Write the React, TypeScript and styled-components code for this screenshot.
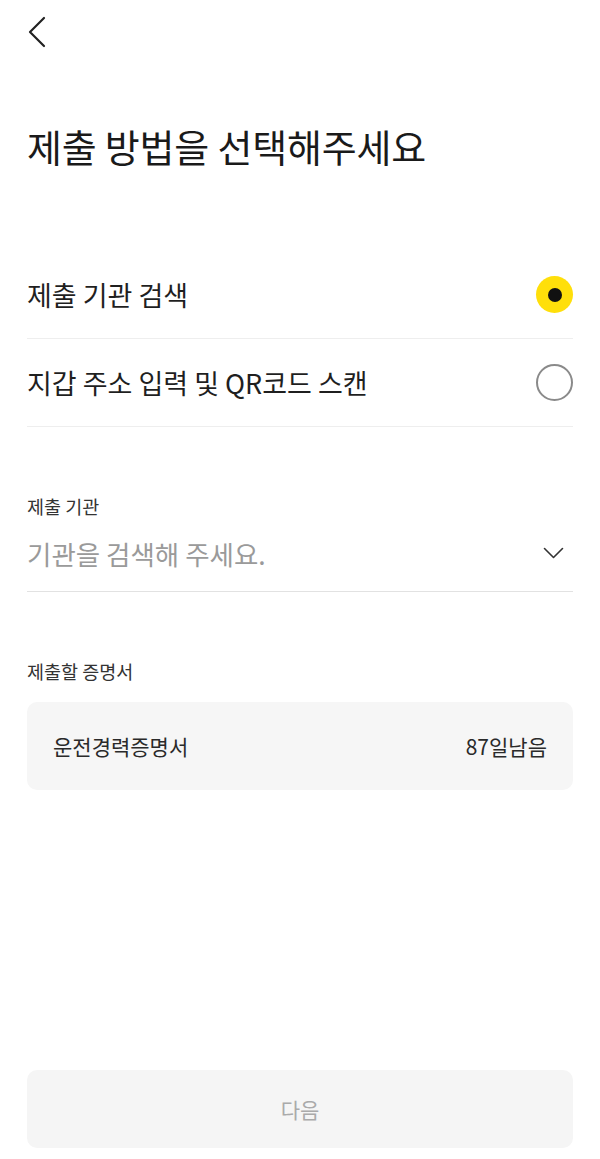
import React, { useState } from "react";
import styled, { createGlobalStyle } from "styled-components";

const GlobalStyle = createGlobalStyle`
  html, body {
    margin: 0;
    padding: 0;
    background: #ffffff;
  }
  body {
    font-family: "Noto Sans CJK KR", "Noto Sans", sans-serif;
    color: #1a1a1a;
  }
  * { box-sizing: border-box; }
`;

const Page = styled.div`
  display: flex;
  flex-direction: column;
  min-height: 1159px;
  padding: 0 27px 11px;
`;

const Header = styled.header`
  display: flex;
  align-items: center;
  height: 64px;
`;

const BackButton = styled.button`
  display: flex;
  align-items: center;
  justify-content: center;
  width: 24px;
  height: 34px;
  margin-left: -2px;
  padding: 0;
  border: 0;
  background: none;
  cursor: pointer;
`;

const Title = styled.h1`
  margin: 57px 0 0;
  font-size: 38px;
  line-height: 50px;
  font-weight: 400;
  color: #1a1a1a;
  letter-spacing: -0.2px;
`;

const OptionList = styled.div`
  display: flex;
  flex-direction: column;
  margin-top: 80px;
`;

const OptionRow = styled.label`
  display: flex;
  align-items: center;
  justify-content: space-between;
  height: 88px;
  border-bottom: 1.5px solid #eeeeee;
  cursor: pointer;
`;

const OptionText = styled.span`
  font-size: 27px;
  font-weight: 400;
  color: #1f1f1f;
`;

const Radio = styled.span<{ $checked: boolean }>`
  display: flex;
  align-items: center;
  justify-content: center;
  width: 37px;
  height: 37px;
  border-radius: 50%;
  background: ${(p) => (p.$checked ? "#ffdf0a" : "#ffffff")};
  border: ${(p) => (p.$checked ? "none" : "2.5px solid #8a8a8a")};
`;

const RadioDot = styled.span`
  width: 14px;
  height: 14px;
  border-radius: 50%;
  background: #111111;
`;

const Field = styled.div`
  display: flex;
  flex-direction: column;
  margin-top: 66px;
`;

const FieldLabel = styled.div`
  font-size: 18.5px;
  line-height: 26px;
  color: #333333;
`;

const SelectBox = styled.div`
  display: flex;
  align-items: center;
  justify-content: space-between;
  height: 73px;
  padding-bottom: 4px;
  border-bottom: 1.5px solid #e2e2e2;
`;

const Placeholder = styled.span`
  font-size: 26.5px;
  color: #9a9a9a;
`;

const ChevronWrap = styled.span`
  display: flex;
  margin-right: 9px;
`;

const CertSection = styled.div`
  display: flex;
  flex-direction: column;
  margin-top: 66px;
  gap: 18px;
`;

const CertCard = styled.div`
  display: flex;
  align-items: center;
  justify-content: space-between;
  height: 88px;
  padding: 0 26px;
  border-radius: 10px;
  background: #f6f6f6;
`;

const CertText = styled.span`
  font-size: 21px;
  color: #2a2a2a;
`;

const NextButton = styled.button`
  margin-top: auto;
  width: 100%;
  height: 78px;
  border: 0;
  border-radius: 10px;
  background: #f5f5f5;
  color: #aaaaaa;
  font-family: "Noto Sans CJK KR", "Noto Sans", sans-serif;
  font-size: 21px;
`;

const options = ["제출 기관 검색", "지갑 주소 입력 및 QR코드 스캔"];

export default function App() {
  const [selected, setSelected] = useState(0);
  return (
    <>
      <GlobalStyle />
      <Page>
        <Header>
          <BackButton aria-label="뒤로">
            <svg width="18" height="32" viewBox="0 0 18 32" fill="none">
              <path d="M16 2 L2 16 L16 30" stroke="#222" strokeWidth="2.2" strokeLinecap="round" strokeLinejoin="round" />
            </svg>
          </BackButton>
        </Header>
        <Title>제출 방법을 선택해주세요</Title>
        <OptionList>
          {options.map((o, i) => (
            <OptionRow key={o} onClick={() => setSelected(i)}>
              <OptionText>{o}</OptionText>
              <Radio $checked={selected === i}>{selected === i && <RadioDot />}</Radio>
            </OptionRow>
          ))}
        </OptionList>
        <Field>
          <FieldLabel>제출 기관</FieldLabel>
          <SelectBox>
            <Placeholder>기관을 검색해 주세요.</Placeholder>
            <ChevronWrap>
              <svg width="21" height="12" viewBox="0 0 21 12" fill="none">
                <path d="M1.5 1.5 L10.5 10.5 L19.5 1.5" stroke="#333" strokeWidth="1.6" strokeLinecap="round" strokeLinejoin="round" />
              </svg>
            </ChevronWrap>
          </SelectBox>
        </Field>
        <CertSection>
          <FieldLabel>제출할 증명서</FieldLabel>
          <CertCard>
            <CertText>운전경력증명서</CertText>
            <CertText>87일남음</CertText>
          </CertCard>
        </CertSection>
        <NextButton>다음</NextButton>
      </Page>
    </>
  );
}
